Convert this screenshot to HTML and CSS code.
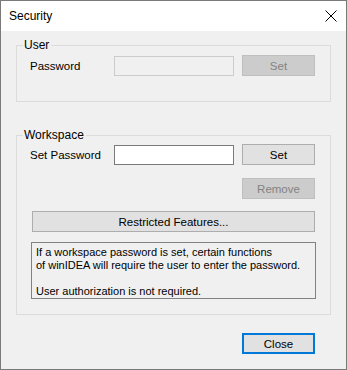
FILE: index.html
```html
<!DOCTYPE html>
<html lang="en">
<head>
    <meta charset="UTF-8">
    <title>Security</title>
    <link rel="stylesheet" href="styles.css">
</head>
<body>
    <div class="window">
        <div class="titlebar">
            <span class="title">Security</span>
            <svg class="close-x" width="12" height="12" viewBox="0 0 12 12">
                <path d="M0.5 0.5 L11.5 11.5 M11.5 0.5 L0.5 11.5" stroke="#000" stroke-width="1" fill="none"/>
            </svg>
        </div>

        <div class="content">
            <div class="group group-user">
                <span class="legend">User</span>
                <div class="row">
                    <label class="field-label">Password</label>
                    <input type="password" class="field" disabled>
                    <button class="btn" disabled>Set</button>
                </div>
            </div>

            <div class="group group-workspace">
                <span class="legend">Workspace</span>
                <div class="row">
                    <label class="field-label">Set Password</label>
                    <input type="password" class="field">
                    <button class="btn">Set</button>
                </div>
                <div class="row row-right">
                    <button class="btn" disabled>Remove</button>
                </div>
                <button class="btn btn-wide">Restricted Features...</button>
                <div class="info">
                    If a workspace password is set, certain functions<br>
                    of winIDEA will require the user to enter the password.<br>
                    <br>
                    User authorization is not required.
                </div>
            </div>

            <div class="footer">
                <button class="btn btn-default">Close</button>
            </div>
        </div>
    </div>
</body>
</html>
```

FILE: styles.css
```css
* {
    box-sizing: border-box;
    margin: 0;
    padding: 0;
}

body {
    font-family: "Liberation Sans", Arial, sans-serif;
    font-size: 11px;
    color: #000;
    background: #f0f0f0;
}

.window {
    width: 347px;
    height: 370px;
    border: 1px solid #7a7a7a;
    background: #f0f0f0;
    display: flex;
    flex-direction: column;
}

.titlebar {
    height: 30px;
    background: #fff;
    display: flex;
    align-items: center;
    justify-content: space-between;
    padding: 0 9px 0 8px;
}

.title {
    font-size: 12px;
}

.close-x {
    display: block;
}

.content {
    padding: 0 15px;
}

.group {
    position: relative;
    width: 315px;
    border: 1px solid #dcdcdc;
    padding: 9px 0 0 13px;
}

.group-user {
    margin-top: 14px;
    height: 57px;
}

.group-workspace {
    margin-top: 33px;
    height: 180px;
    padding-top: 8px;
}

.legend {
    position: absolute;
    top: -8px;
    left: 6px;
    padding: 0 2px 0 1px;
    background: #f0f0f0;
    line-height: 15px;
    font-size: 12px;
}

.row {
    display: flex;
    align-items: center;
    height: 21px;
}

.field-label {
    width: 84px;
    font-size: 11.5px;
}

.field {
    width: 120px;
    height: 20px;
    border: 1px solid #7a7a7a;
    background: #fff;
    margin-right: 8px;
    outline: none;
}

.field:disabled {
    border-color: #cccccc;
    background: #f0f0f0;
}

.btn {
    width: 73px;
    height: 21px;
    border: 1px solid #adadad;
    background: #e1e1e1;
    font-family: inherit;
    font-size: 11.5px;
    color: #000;
}

.btn:disabled {
    border-color: #bfbfbf;
    background: #cccccc;
    color: #838383;
}

.row-right {
    margin-top: 13px;
    padding-left: 212px;
}

.btn-wide {
    display: block;
    width: 283px;
    margin: 12px 0 0 2px;
}

.info {
    width: 285px;
    height: 57px;
    margin: 10px 0 0 1px;
    border: 1px solid #828282;
    padding: 3px 0 0 4px;
    line-height: 13px;
    white-space: nowrap;
}

.footer {
    display: flex;
    justify-content: flex-end;
    padding-right: 16px;
    margin-top: 18px;
}

.btn-default {
    border: 2px solid #0078d7;
}
```
